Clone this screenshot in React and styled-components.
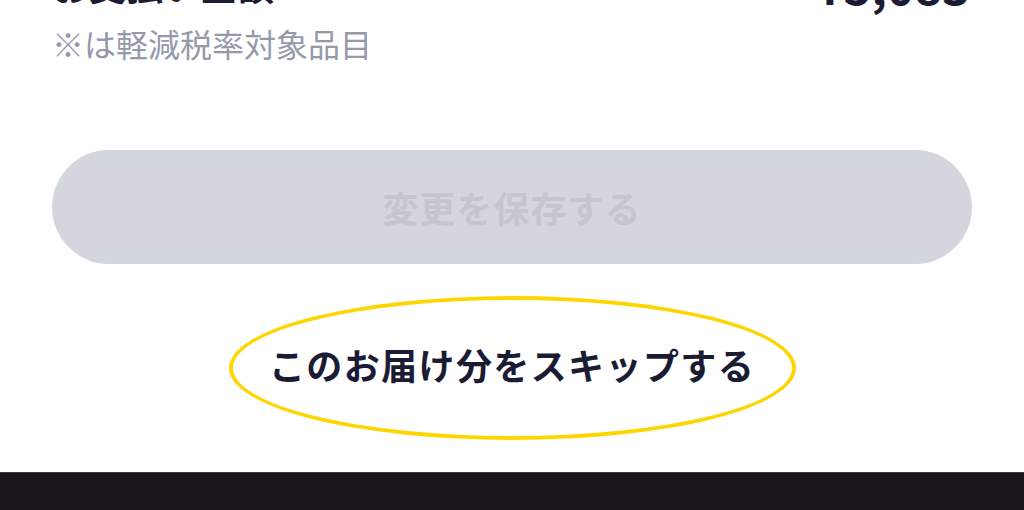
import styled, { createGlobalStyle } from 'styled-components';

const GlobalStyle = createGlobalStyle`
  html, body {
    margin: 0;
    padding: 0;
    background: #ffffff;
  }
  body {
    font-family: "Noto Sans CJK JP", "Noto Sans", sans-serif;
    -webkit-font-smoothing: antialiased;
  }
`;

const colors = {
  text: '#1b1c33',
  muted: '#959aab',
  disabled: '#d3d6de',
  disabledText: '#c3c6cf',
  highlight: '#ffd500',
  bar: '#1a161b',
};

const Page = styled.div`
  display: flex;
  flex-direction: column;
  height: 510px;
  overflow: hidden;
`;

const Content = styled.div`
  flex: 1;
  display: flex;
  flex-direction: column;
  padding: 0 52px;
`;

const TotalRow = styled.div`
  display: flex;
  justify-content: space-between;
  align-items: flex-start;
  margin-top: -39px;
  line-height: 48px;
  color: ${colors.text};
  font-weight: 700;
`;

const TotalLabel = styled.div`
  font-size: 37px;
`;

const TotalPrice = styled.div`
  font-size: 47px;
  padding-right: 2px;
`;

const Note = styled.div`
  margin-top: 8px;
  font-size: 32px;
  line-height: 52px;
  color: ${colors.muted};
`;

const SaveButton = styled.button`
  margin-top: 81px;
  height: 114px;
  width: 100%;
  border: none;
  border-radius: 57px;
  background: ${colors.disabled};
  color: ${colors.disabledText};
  font-family: inherit;
  font-size: 36px;
  font-weight: 700;
  letter-spacing: 1px;
  cursor: not-allowed;
`;

const SkipWrap = styled.div`
  display: flex;
  justify-content: center;
  margin-top: 32px;
`;

const SkipLink = styled.a`
  display: inline-flex;
  align-items: center;
  justify-content: center;
  box-sizing: border-box;
  width: 567px;
  height: 144px;
  padding-bottom: 8px;
  border: 4px solid ${colors.highlight};
  border-radius: 50%;
  color: ${colors.text};
  font-size: 36px;
  font-weight: 700;
  letter-spacing: 1.4px;
  text-decoration: none;
  cursor: pointer;
`;

const HomeBar = styled.div`
  height: 37px;
  background: ${colors.bar};
  border-top: 1px solid #3c3a40;
`;

export default function App() {
  return (
    <>
      <GlobalStyle />
      <Page>
        <Content>
          <TotalRow>
            <TotalLabel>お支払い金額</TotalLabel>
            <TotalPrice>¥5,083</TotalPrice>
          </TotalRow>
          <Note>※は軽減税率対象品目</Note>
          <SaveButton disabled>変更を保存する</SaveButton>
          <SkipWrap>
            <SkipLink>このお届け分をスキップする</SkipLink>
          </SkipWrap>
        </Content>
        <HomeBar />
      </Page>
    </>
  );
}
